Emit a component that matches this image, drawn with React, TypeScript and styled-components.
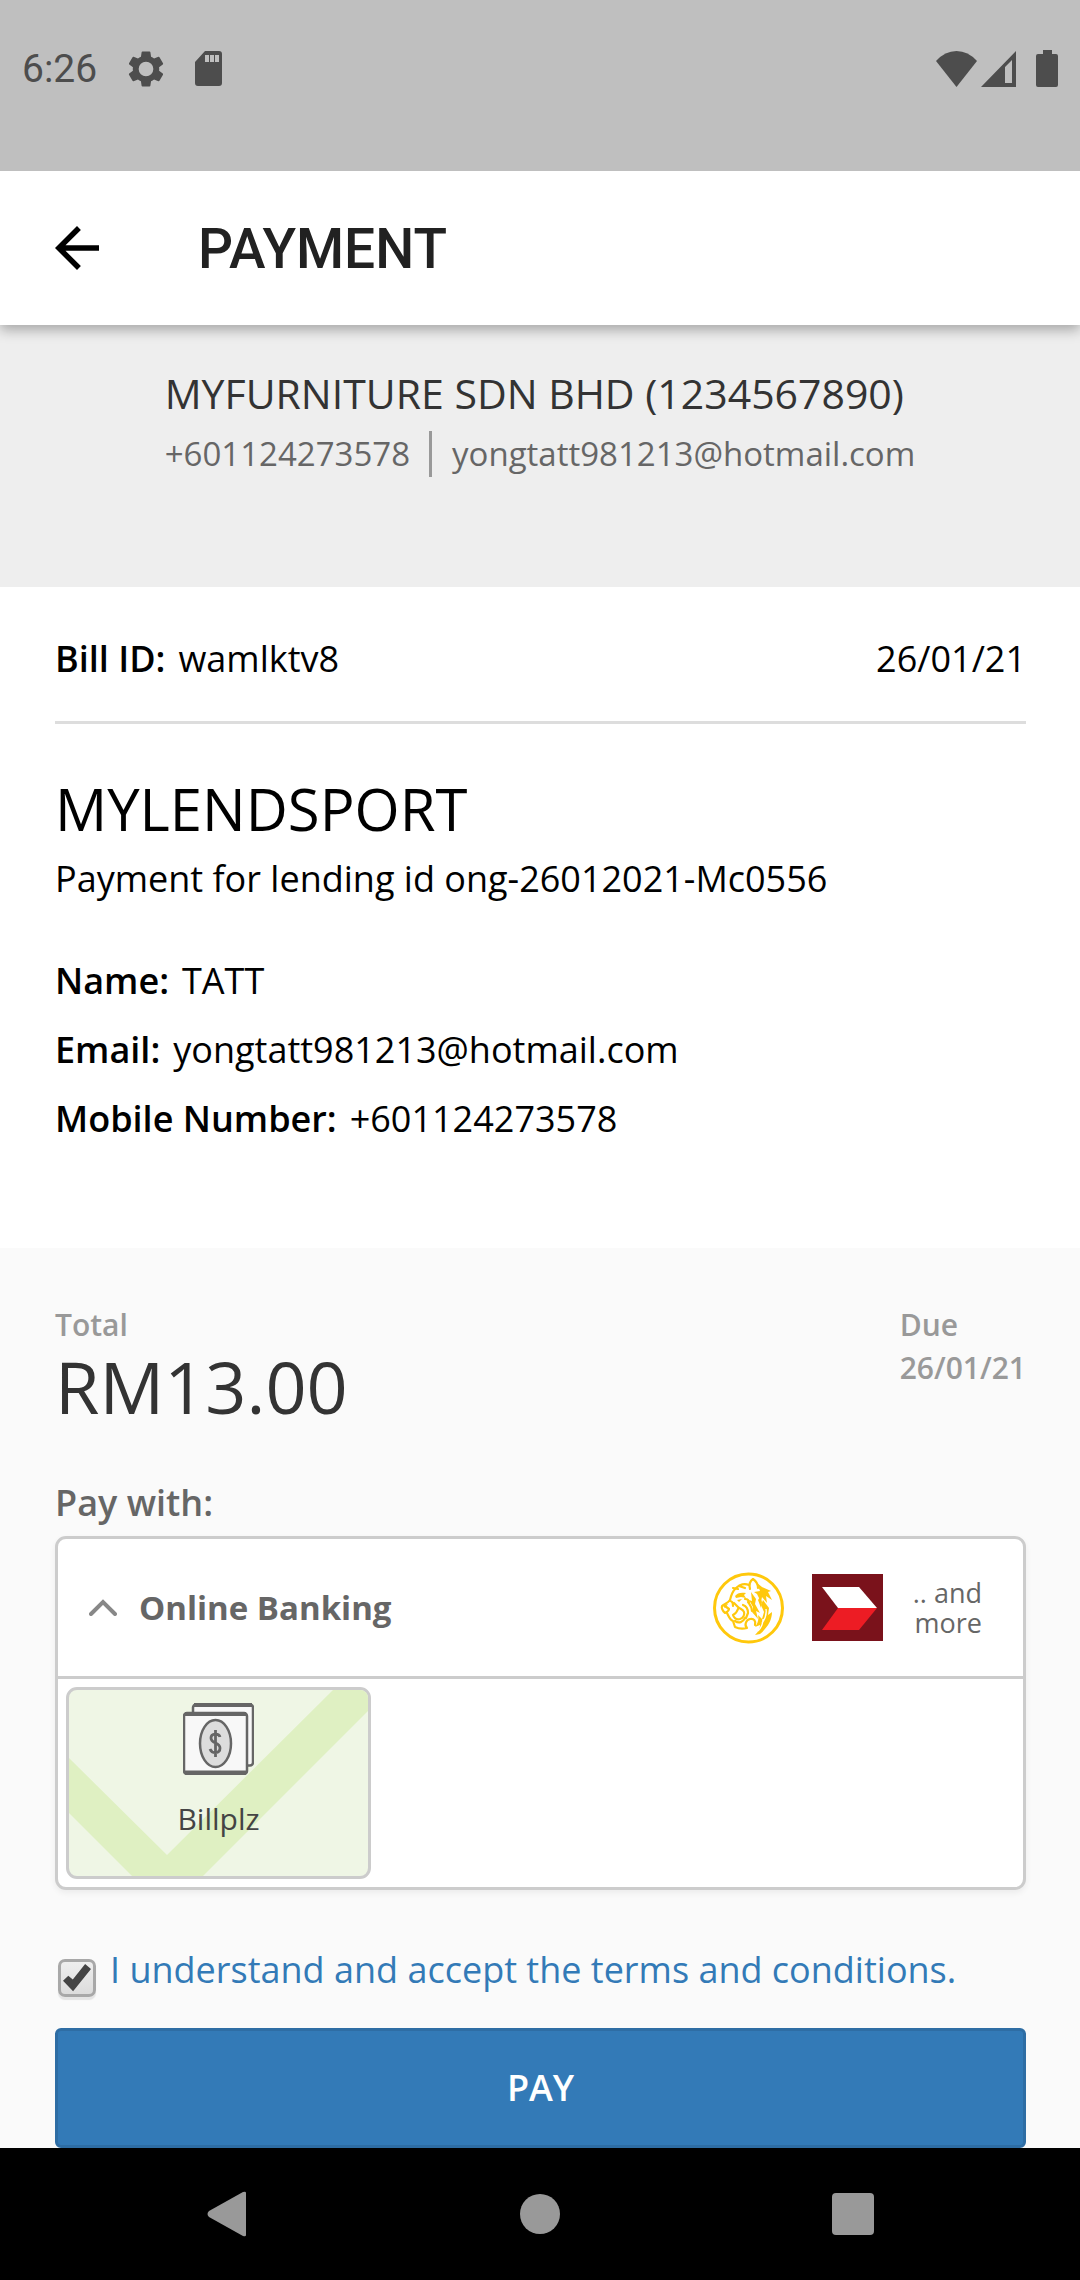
import React from 'react';
import styled, { createGlobalStyle } from 'styled-components';

const GlobalStyle = createGlobalStyle`
  *, *::before, *::after { box-sizing: border-box; }
  html, body { margin: 0; padding: 0; }
  body { font-family: 'Open Sans', sans-serif; background: #fff; color: #000; }
  h1, h2, p, dl, dt, dd { margin: 0; font-weight: 400; }
  svg { display: block; flex: none; }
`;

const Screen = styled.div`
  display: flex;
  flex-direction: column;
  min-height: 100vh;
`;

const StatusBar = styled.div`
  display: flex;
  justify-content: space-between;
  align-items: center;
  height: 171px;
  padding: 0 22px 34px;
  background: #bfbfbf;
  color: #4d4d4d;
`;

const StatusGroup = styled.div<{ $gap: number }>`
  display: flex;
  align-items: center;
  gap: ${(p) => p.$gap}px;
`;

const Clock = styled.time`
  font: 400 39px/46px Roboto, sans-serif;
`;

const AppBar = styled.header`
  position: relative;
  z-index: 1;
  display: flex;
  align-items: center;
  height: 154px;
  padding: 0 44px;
  background: #fff;
  box-shadow: 0 5px 12px rgba(0, 0, 0, 0.3);
  clip-path: inset(0 0 -30px 0);
`;

const IconButton = styled.button`
  display: flex;
  align-items: center;
  justify-content: center;
  padding: 0;
  border: 0;
  background: none;
  color: inherit;
`;

const AppTitle = styled.h1`
  margin-left: 88px;
  padding-top: 2px;
  font: 500 55px/64px Roboto, sans-serif;
  color: #212121;
`;

const Merchant = styled.section`
  display: flex;
  flex-direction: column;
  align-items: center;
  height: 262px;
  padding-top: 39px;
  background: #eee;
`;

const MerchantName = styled.h2`
  font-size: 41px;
  line-height: 58px;
  color: #333;
`;

const Contacts = styled.div`
  display: flex;
  align-items: center;
  margin-top: 9px;
  font-size: 33px;
  line-height: 46px;
  color: #666;
`;

const Contact = styled.span`
  & + & {
    margin-left: 19px;
    padding-left: 20px;
    border-left: 3px solid #999;
  }
`;

const Bill = styled.section`
  padding: 44px 54px 102px 55px;
  background: #fff;
  font-size: 36px;
  line-height: 55px;
`;

const BillHead = styled.div`
  display: flex;
  justify-content: space-between;
  padding-bottom: 35px;
  border-bottom: 3px solid #ddd;
`;

const Title = styled.h2`
  margin-top: 45px;
  font-size: 58px;
  line-height: 80px;
`;

const Description = styled.p`
  margin-top: 2px;
`;

const Details = styled.dl`
  display: grid;
  gap: 14px;
  margin-top: 47px;
`;

const Detail = styled.div`
  display: flex;
  gap: 13px;
`;

const Term = styled.dt`
  font-weight: 600;
`;

const Value = styled.dd``;

const Checkout = styled.section`
  flex: 1;
  padding: 55px 54px 0 55px;
  background: #fafafa;
`;

const Totals = styled.div`
  display: flex;
  justify-content: space-between;
`;

const Caption = styled.p`
  font-size: 30px;
  line-height: 43px;
  font-weight: 600;
  color: #999;
`;

const Amount = styled.p`
  font-size: 72px;
  line-height: 80px;
  color: #333;
`;

const PayWith = styled.p`
  margin-top: 49px;
  font-size: 36px;
  line-height: 55px;
  font-weight: 600;
  color: #666;
`;

const Methods = styled.div`
  margin-top: 6px;
  border: 3px solid #ccc;
  border-radius: 11px;
  background: #fff;
  box-shadow: 0 3px 6px rgba(0, 0, 0, 0.06);
`;

const MethodHead = styled.button`
  display: flex;
  align-items: center;
  width: 100%;
  height: 140px;
  padding: 0 41px 0 31px;
  border: 0;
  border-bottom: 3px solid #ccc;
  background: none;
  font: 700 33px/46px 'Open Sans', sans-serif;
  color: #666;
  text-align: left;
`;

const MethodName = styled.span`
  flex: 1;
  margin-left: 22px;
`;

const Banks = styled.span`
  display: flex;
  align-items: center;
  gap: 28px;
`;

const More = styled.span`
  width: 71px;
  font-size: 27px;
  line-height: 30px;
  font-weight: 400;
  text-align: right;
`;

const Options = styled.div`
  display: flex;
  padding: 8px;
`;

const Option = styled.label`
  position: relative;
  display: flex;
  flex-direction: column;
  align-items: center;
  width: 305px;
  height: 192px;
  padding-top: 13px;
  border: 3px solid #ccc;
  border-radius: 11px;
  background: #eff6e5;
  font-size: 30px;
  line-height: 42px;
  color: #444;
  overflow: hidden;
`;

const HiddenRadio = styled.input`
  position: absolute;
  inset: 0;
  margin: 0;
  opacity: 0;
`;

const Tick = styled.svg`
  position: absolute;
  inset: 0;
  width: 100%;
  height: 100%;
`;

const OptionFace = styled.span`
  position: relative;
  display: flex;
  flex-direction: column;
  align-items: center;
  gap: 23px;
`;

const Terms = styled.div`
  display: flex;
  align-items: flex-start;
  gap: 14px;
  margin-top: 52px;
  padding-left: 3px;
  font-size: 36px;
  line-height: 55px;
`;

const TickBox = styled.input`
  appearance: none;
  flex: none;
  display: grid;
  place-items: center;
  width: 38px;
  height: 38px;
  margin: 17px 0 0;
  border: 3px solid #a8a8a8;
  border-radius: 7px;
  background: linear-gradient(#eee, #dcdcdc);
  box-shadow: 0 3px 1px #e4e4e4;

  &:checked::after {
    content: '';
    width: 28px;
    height: 28px;
    background: #444;
    clip-path: polygon(0 60%, 19% 42%, 35% 55%, 79% 0, 100% 18%, 36% 97%);
  }
`;

const TermsLink = styled.a`
  color: #337ab7;
  text-decoration: none;
`;

const PayButton = styled.button`
  display: block;
  width: 100%;
  height: 120px;
  margin-top: 31px;
  border: 3px solid #2e6da4;
  border-radius: 6px;
  background: #337ab7;
  font: 600 36px/50px 'Open Sans', sans-serif;
  color: #fff;
`;

const NavBar = styled.nav`
  display: grid;
  grid-template-columns: 1fr 1fr 1fr;
  align-items: center;
  height: 132px;
  padding: 0 70px;
  background: #000;
  color: #999;
`;

const GearIcon = () => (
  <svg width="44" height="44" viewBox="0 0 24 24" fill="currentColor">
    <path d="M19.14 12.94c.04-.3.06-.61.06-.94 0-.32-.02-.64-.07-.94l2.03-1.58a.49.49 0 0 0 .12-.61l-1.92-3.32a.49.49 0 0 0-.59-.22l-2.39.96c-.5-.38-1.03-.7-1.62-.94l-.36-2.54a.48.48 0 0 0-.48-.41h-3.84c-.24 0-.43.17-.47.41l-.36 2.54c-.59.24-1.13.57-1.62.94l-2.39-.96a.48.48 0 0 0-.59.22L2.74 8.87c-.12.21-.08.47.12.61l2.03 1.58c-.05.3-.09.63-.09.94s.02.64.07.94l-2.03 1.58a.49.49 0 0 0-.12.61l1.92 3.32c.12.22.37.29.59.22l2.39-.96c.5.38 1.03.7 1.62.94l.36 2.54c.05.24.24.41.48.41h3.84c.24 0 .44-.17.47-.41l.36-2.54c.59-.24 1.13-.56 1.62-.94l2.39.96c.22.08.47 0 .59-.22l1.92-3.32c.12-.22.07-.47-.12-.61l-2.01-1.58zM12 16a4 4 0 1 1 0-8 4 4 0 0 1 0 8z" />
  </svg>
);

const SdCardIcon = () => (
  <svg width="28" height="38" viewBox="1 0 28 38" fill="currentColor">
    <path
      fillRule="evenodd"
      d="M11 1h14q3 0 3 3v29q0 3-3 3H4q-3 0-3-3V12zM11 5v7h4V5zm5 0v7h4V5zm5 0v7h4V5z"
    />
  </svg>
);

const WifiIcon = () => (
  <svg width="41" height="36" viewBox="0 0 41 36" fill="currentColor">
    <path d="M20.500 36 0 10Q9 0 20.500 0T41 10z" />
  </svg>
);

const SignalIcon = () => (
  <svg width="35" height="36" viewBox="0 0 35 36" fill="currentColor">
    <path fillRule="evenodd" d="M0 36 35 0v36zM24 16v16h7V9z" />
  </svg>
);

const BatteryIcon = () => (
  <svg width="38" height="37" viewBox="-16 0 38 37" fill="currentColor">
    <path d="M7 0h9v4h4q2 0 2 2v29q0 2-2 2H2q-2 0-2-2V6q0-2 2-2h5z" />
  </svg>
);

const BackArrow = () => (
  <svg width="66" height="66" viewBox="0 0 24 24" fill="currentColor">
    <path d="M20 11H7.83l5.59-5.59L12 4l-8 8 8 8 1.41-1.41L7.83 13H20v-2z" />
  </svg>
);

const ChevronUp = () => (
  <svg width="28" height="17" viewBox="0 0 28 17" fill="none" stroke="#888" strokeWidth="4">
    <path d="M2 15 14 3l12 12" strokeLinecap="round" />
  </svg>
);

const TigerLogo = () => (
  <svg width="71" height="72" viewBox="0 0 71 72" fill="none">
    <circle cx="35.5" cy="36" r="34" stroke="#ffc80c" strokeWidth="3" />
    <g stroke="#ffc80c" strokeWidth="2.2" strokeLinejoin="round" strokeLinecap="round">
      <path d="M36 13c-5-2-10 0-14 4-3 3-4 7-5 11-2 3-6 4-8 6-1 3 1 5 3 7 2-1 4-2 4-4l-4-3" />
      <path d="M37 17c-1-4 0-8 3-10 3 2 5 5 5 9" />
      <path d="M17 29c2 0 3 2 3 5M21 31l4 4c2 2 5 2 6 5s-1 6-4 7c-4 1-6-1-7-4 2-1 4-3 5-6" />
      <path d="M14 41c2 4 3 7 6 8l2 6c4 2 8 2 12 1-3-3-1-8 3-9s6 2 5 6" />
      <path d="M22 49c4 3 8 1 10-3M30 33c3 1 5 4 5 8l-2 5M35 30c2 3 4 5 4 9M20 16l5 1M26 14l6 2M32 27c3 0 4 2 4 4" />
    </g>
    <g fill="#ffc80c">
      <path d="M22 24c2-3 6-4 11-3l-2 2 2 3-5-1-5 1zM24 28l5-1-3 3zM9 33l6-1-3 4z" />
      <path d="M44 11l5 4 9 4-3 1 4 8-6-4 1 7-5-6-1 5-4-8-3-2 6-1z" />
      <path d="M38 20l5 7-1 5 5 9-4-2 2 8-6-7 1-5-4-7 3 1z" />
      <path d="M50 28l6 8-1 7 4-3c0 8-4 15-12 22l-5 1c4-4 5-7 5-10l-5 2c3-4 4-8 3-12l4 4 2-7-3-7z" />
      <path d="M47 25l2 5-1 6-3-8z" />
    </g>
    <g stroke="#fff" strokeWidth="1.300">
      <path d="M53 37c1 6-1 10-4 14M50 47c0 5-2 9-5 12" />
    </g>
  </svg>
);

const CimbLogo = () => (
  <svg width="71" height="67" viewBox="0 0 71 67">
    <rect width="71" height="67" fill="#7a121b" />
    <path fill="#fff" d="M10 13h37l18 21H26z" />
    <path fill="#ed1c24" d="M26 34h39L47 56H10z" />
  </svg>
);

const CashIcon = () => (
  <svg width="71" height="72" viewBox="0 0 71 72" stroke="#666">
    <rect x="10" y="1.5" width="60" height="61" rx="3" fill="#f8f8f8" strokeWidth="2.5" />
    <path d="M11 2h58" strokeWidth="4" />
    <rect x="1" y="10" width="63" height="61" rx="3" fill="#f8f8f8" strokeWidth="2.5" />
    <path d="M2 11h61M2 69.5h61" strokeWidth="4" />
    <ellipse cx="32.5" cy="40.5" rx="15.5" ry="23.5" fill="#ddd" strokeWidth="2.5" />
    <path
      d="M37 34c-1-4-9-4-9 1 0 6 9 4 9 10 0 6-8 6-10 1M32.5 27v27"
      fill="none"
      strokeWidth="2.8"
    />
  </svg>
);

export default function App() {
  return (
    <Screen>
      <GlobalStyle />
      <StatusBar>
        <StatusGroup $gap={27}>
          <Clock>6:26</Clock>
          <GearIcon />
          <SdCardIcon />
        </StatusGroup>
        <StatusGroup $gap={4}>
          <WifiIcon />
          <SignalIcon />
          <BatteryIcon />
        </StatusGroup>
      </StatusBar>

      <AppBar>
        <IconButton aria-label="Back">
          <BackArrow />
        </IconButton>
        <AppTitle>PAYMENT</AppTitle>
      </AppBar>

      <Merchant>
        <div>
          <MerchantName>MYFURNITURE SDN BHD (1234567890)</MerchantName>
          <Contacts>
            <Contact>+601124273578</Contact>
            <Contact>yongtatt981213@hotmail.com</Contact>
          </Contacts>
        </div>
      </Merchant>

      <Bill>
        <BillHead>
          <Detail as="p">
            <Term as="strong">Bill ID:</Term>
            <Value as="span">wamlktv8</Value>
          </Detail>
          <time>26/01/21</time>
        </BillHead>
        <Title>MYLENDSPORT</Title>
        <Description>Payment for lending id ong-26012021-Mc0556</Description>
        <Details>
          <Detail>
            <Term>Name:</Term>
            <Value>TATT</Value>
          </Detail>
          <Detail>
            <Term>Email:</Term>
            <Value>yongtatt981213@hotmail.com</Value>
          </Detail>
          <Detail>
            <Term>Mobile Number:</Term>
            <Value>+601124273578</Value>
          </Detail>
        </Details>
      </Bill>

      <Checkout>
        <Totals>
          <div>
            <Caption>Total</Caption>
            <Amount>RM13.00</Amount>
          </div>
          <div>
            <Caption>Due</Caption>
            <Caption>26/01/21</Caption>
          </div>
        </Totals>
        <PayWith>Pay with:</PayWith>
        <Methods>
          <MethodHead aria-expanded="true">
            <ChevronUp />
            <MethodName>Online Banking</MethodName>
            <Banks>
              <TigerLogo />
              <CimbLogo />
              <More>.. and more</More>
            </Banks>
          </MethodHead>
          <Options>
            <Option>
              <HiddenRadio type="radio" name="gateway" defaultChecked />
              <Tick viewBox="0 0 299 186" preserveAspectRatio="none" aria-hidden="true">
                <path fill="#dff0c2" d="M0 68l98 97L264 0h35v21L134 186H63L0 123z" />
              </Tick>
              <OptionFace>
                <CashIcon />
                Billplz
              </OptionFace>
            </Option>
          </Options>
        </Methods>
        <Terms>
          <TickBox
            type="checkbox"
            aria-label="I understand and accept the terms and conditions."
            defaultChecked
          />
          <TermsLink href="#terms">I understand and accept the terms and conditions.</TermsLink>
        </Terms>
        <PayButton>PAY</PayButton>
      </Checkout>

      <NavBar>
        <IconButton aria-label="Back">
          <svg width="40" height="46" viewBox="0 0 40 46" fill="currentColor">
            <path d="M2 20 36 1q3-1 3 1v42q0 2-3 1L2 26q-3-3 0-6z" />
          </svg>
        </IconButton>
        <IconButton aria-label="Home">
          <svg width="40" height="42" viewBox="0 0 40 42" fill="currentColor">
            <circle cx="20" cy="21" r="20" />
          </svg>
        </IconButton>
        <IconButton aria-label="Recent apps">
          <svg width="42" height="42" viewBox="0 0 42 42" fill="currentColor">
            <rect width="42" height="42" rx="4" />
          </svg>
        </IconButton>
      </NavBar>
    </Screen>
  );
}
